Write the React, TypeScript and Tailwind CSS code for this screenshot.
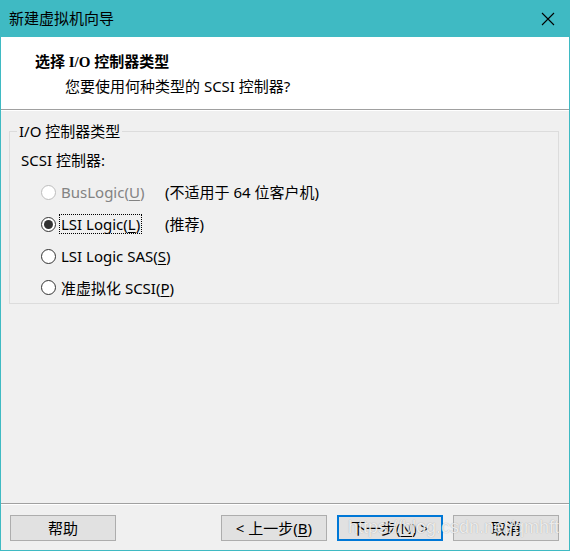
import React from "react";

const ui = { fontFamily: '"Noto Sans", "Noto Sans CJK SC", sans-serif' };

function Radio({ checked, disabled }: { checked?: boolean; disabled?: boolean }) {
  return (
    <span
      className={`flex h-[15px] w-[15px] shrink-0 items-center justify-center rounded-full border bg-white ${
        disabled ? "border-[#bcbcbc]" : "border-[#333333]"
      }`}
    >
      {checked && <span className="h-[9px] w-[9px] rounded-full bg-[#333333]" />}
    </span>
  );
}

function Option({
  label,
  mnemonic,
  suffix = ")",
  note,
  checked,
  disabled,
  focused,
  tall = true,
}: {
  label: string;
  mnemonic: string;
  suffix?: string;
  note?: string;
  checked?: boolean;
  disabled?: boolean;
  focused?: boolean;
  tall?: boolean;
}) {
  return (
    <div className={`flex items-center pl-[31px] ${tall ? "h-[32px]" : "h-[31px]"}`}>
      <div className="flex w-[124px] items-center gap-[4px]">
        <Radio checked={checked} disabled={disabled} />
        <span
          className={`whitespace-nowrap px-[1px] leading-[18px] ${
            focused ? "outline outline-1 outline-dotted outline-black" : ""
          } ${disabled ? "text-[#838383]" : "text-black"}`}
        >
          {label}
          <span className="underline underline-offset-2">{mnemonic}</span>
          {suffix}
        </span>
      </div>
      {note && <span className="whitespace-nowrap text-black">{note}</span>}
    </div>
  );
}

function Button({ children, primary }: { children: React.ReactNode; primary?: boolean }) {
  return (
    <button
      className={`flex h-[26px] w-[106px] items-center justify-center bg-[#e1e1e1] text-[15px] text-black ${
        primary ? "border-2 border-[#0078d7]" : "border border-[#adadad]"
      }`}
    >
      {children}
    </button>
  );
}

export default function App() {
  return (
    <div
      className="relative flex h-[551px] w-[570px] flex-col border-x border-b border-[#3fbac3] bg-[#f0f0f0] text-[15px]"
      style={ui}
    >
      {/* title bar */}
      <div className="-mx-px flex h-[37px] shrink-0 items-center justify-between bg-[#3fbac3] pl-[9px] pr-[15px]">
        <span className="text-[15px] text-black">新建虚拟机向导</span>
        <svg width="14" height="14" viewBox="0 0 14 14" className="mt-[1px]">
          <path d="M1 1 L13 13 M13 1 L1 13" stroke="#000" strokeWidth="1.1" />
        </svg>
      </div>

      {/* header */}
      <div className="flex h-[72px] shrink-0 flex-col bg-white">
        <div
          className="mt-[16px] pl-[34px] text-[15px] font-bold leading-[18px] text-black"
          style={{ fontFamily: '"Liberation Serif", "Noto Sans CJK SC", serif' }}
        >
          选择 I/O 控制器类型
        </div>
        <div className="mt-[6px] pl-[64px] leading-[18px] text-black">您要使用何种类型的 SCSI 控制器?</div>
      </div>
      <div className="h-[2px] shrink-0 border-t border-[#a0a0a0] bg-white" />

      {/* body */}
      <div className="flex-1">
        <fieldset className="ml-[8px] mt-[12px] w-[550px] border border-[#dcdcdc] px-0 pb-0">
          <legend className="ml-[7px] px-[2px] leading-[16px] text-black">I/O 控制器类型</legend>
          <div className="mt-[11px] pl-[11px] leading-[20px] text-black">SCSI 控制器:</div>
          <div className="mt-[6px] flex flex-col">
            <Option label="BusLogic(" mnemonic="U" note="(不适用于 64 位客户机)" disabled />
            <Option label="LSI Logic(" mnemonic="L" note="(推荐)" checked focused />
            <Option label="LSI Logic SAS(" mnemonic="S" />
            <Option label="准虚拟化 SCSI(" mnemonic="P" tall={false} />
          </div>
        </fieldset>
      </div>

      {/* footer */}
      <div className="h-[2px] shrink-0 border-t border-[#a0a0a0] bg-white" />
      <div className="flex h-[45px] shrink-0 items-start pl-[9px] pr-[10px] pt-[10px]">
        <Button>帮助</Button>
        <div className="flex-1" />
        <div className="flex gap-[10px]">
          <Button>&lt; 上一步(<span className="underline underline-offset-2">B</span>)</Button>
          <Button primary>
            下一步(<span className="underline underline-offset-2">N</span>) &gt;
          </Button>
          <Button>取消</Button>
        </div>
      </div>

      {/* watermark */}
      <span
        className="pointer-events-none absolute bottom-[9px] right-[10px] whitespace-nowrap text-[18px] text-white/80"
        style={{ fontFamily: '"Liberation Sans", sans-serif', textShadow: "0 0 1px rgba(0,0,0,0.35)" }}
      >
        https://blog.csdn.net/qmhft
      </span>
    </div>
  );
}
